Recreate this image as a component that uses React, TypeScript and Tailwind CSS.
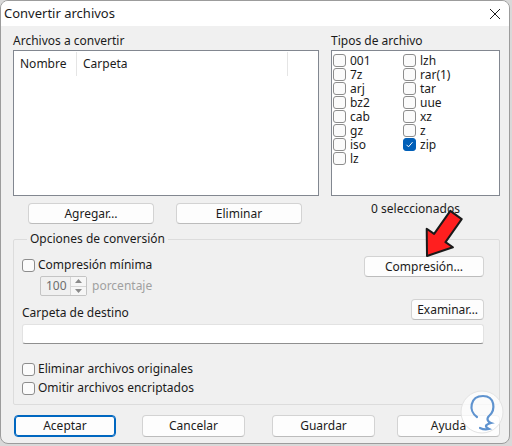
import React from 'react';

function Check({ checked = false }: { checked?: boolean }) {
  return (
    <span
      className={
        'w-[13px] h-[13px] rounded-[3px] border flex items-center justify-center shrink-0 ' +
        (checked ? 'bg-[#005fb8] border-[#005fb8]' : 'bg-[#fbfbfb] border-[#8d8d8d]')
      }
    >
      {checked && (
        <svg width="9" height="9" viewBox="0 0 9 9">
          <path d="M1.5 4.8 L3.5 6.8 L7.5 2.2" fill="none" stroke="white" strokeWidth="1" />
        </svg>
      )}
    </span>
  );
}

function Btn({
  children,
  w,
  tall = false,
  primary = false,
}: {
  children: React.ReactNode;
  w: string;
  tall?: boolean;
  primary?: boolean;
}) {
  return (
    <div
      className={
        'rounded-[4px] flex items-center justify-center bg-[#fdfdfd] text-[#1b1b1b] ' +
        w +
        (tall ? ' h-[22px]' : ' h-[21px]') +
        (primary
          ? ' border border-[#0067c0] shadow-[inset_0_0_0_1px_#0067c0]'
          : ' border border-[#d3d3d3] border-b-[#bcbcbc]')
      }
    >
      {children}
    </div>
  );
}

const types1 = ['001', '7z', 'arj', 'bz2', 'cab', 'gz', 'iso', 'lz'];
const types2 = ['lzh', 'rar(1)', 'tar', 'uue', 'xz', 'z', 'zip'];

export default function App() {
  return (
    <div className="relative w-[512px] h-[446px] bg-[#d9d9d9] overflow-hidden font-['Noto_Sans',sans-serif] text-[12px] text-[#1b1b1b]">
      <div className="w-[510px] h-[444px] rounded-[8px] overflow-hidden border border-[#9c9c9c] bg-[#f0f0f0] flex flex-col">
        {/* title bar */}
        <div className="h-[25px] bg-white flex items-center justify-between pl-[3px] pr-[8px]">
          <span className="text-[13px] leading-[16px] -mt-[1px]">Convertir archivos</span>
          <svg width="12" height="12" viewBox="0 0 12 12">
            <path d="M1 1 L11 11 M11 1 L1 11" stroke="#1b1b1b" strokeWidth="1" />
          </svg>
        </div>

        <div className="pl-[12px] pr-[9px] pt-[7px] flex flex-col">
          {/* top */}
          <div className="flex gap-[12px]">
            <div className="w-[306px] flex flex-col">
              <div className="leading-[16px]">Archivos a convertir</div>
              <div className="mt-[1px] h-[146px] border border-[#828790] bg-white">
                <div className="flex h-[24px] mt-[1px] items-center">
                  <div className="w-[63px] h-full flex items-center pl-[6px] border-r border-[#e5e5e5]">Nombre</div>
                  <div className="w-[211px] h-full flex items-center pl-[6px] border-r border-[#e5e5e5]">Carpeta</div>
                </div>
              </div>
              <div className="mt-[7px] flex gap-[22px] pl-[15px]">
                <Btn w="w-[126px]">Agregar…</Btn>
                <Btn w="w-[126px]">Eliminar</Btn>
              </div>
            </div>
            <div className="w-[169px] flex flex-col">
              <div className="leading-[16px]">Tipos de archivo</div>
              <div className="mt-[1px] h-[146px] border border-[#828790] bg-white pl-[1px] pt-[2px] flex">
                <div className="w-[70px] flex flex-col">
                  {types1.map((t) => (
                    <div key={t} className="h-[14px] flex items-center gap-[4px]">
                      <Check />
                      <span className="leading-[13px]">{t}</span>
                    </div>
                  ))}
                </div>
                <div className="flex flex-col">
                  {types2.map((t) => (
                    <div key={t} className="h-[14px] flex items-center gap-[4px]">
                      <Check checked={t === 'zip'} />
                      <span className="leading-[13px]">{t}</span>
                    </div>
                  ))}
                </div>
              </div>
              <div className="mt-[5px] leading-[16px] text-center">0 seleccionados</div>
            </div>
          </div>

          {/* group */}
          <fieldset className="mt-[7px] border border-[#dcdcdc] rounded-[2px] pl-[8px] pr-[15px] pb-[8px]">
            <legend className="ml-[5px] px-[3px] leading-[16px]">Opciones de conversión</legend>
            <div className="mt-[9px] flex justify-between">
              <div className="flex flex-col pt-[1px]">
                <div className="flex items-center gap-[3px] leading-[16px]">
                  <Check />
                  <span>Compresión mínima</span>
                </div>
                <div className="mt-[3px] ml-[18px] flex items-center">
                  <div className="w-[47px] h-[20px] border border-[#c4c4c4] rounded-[2px] flex">
                    <div className="flex-1 flex items-center pl-[5px] text-[#6d6d6d]">100</div>
                    <div className="w-[16px] border-l border-[#d6d6d6] flex flex-col bg-[#f6f6f6]">
                      <div className="flex-1 flex items-center justify-center border-b border-[#d6d6d6]">
                        <svg width="7" height="4" viewBox="0 0 7 4"><path d="M0 4 L3.5 0 L7 4Z" fill="#8a8a8a" /></svg>
                      </div>
                      <div className="flex-1 flex items-center justify-center">
                        <svg width="7" height="4" viewBox="0 0 7 4"><path d="M0 0 L3.5 4 L7 0Z" fill="#8a8a8a" /></svg>
                      </div>
                    </div>
                  </div>
                  <span className="ml-[5px] text-[#a0a0a0]">porcentaje</span>
                </div>
              </div>
              <Btn w="w-[120px]">Compresión…</Btn>
            </div>
            <div className="mt-[3px] flex justify-between items-end">
              <span className="leading-[16px] mb-[-1px]">Carpeta de destino</span>
              <Btn w="w-[73px]">Examinar…</Btn>
            </div>
            <div className="mt-[4px] h-[20px] bg-white border border-[#e2e2e2] border-b-[#8f8f8f] rounded-[3px]" />
            <div className="mt-[17px] flex items-center gap-[3px] leading-[16px]">
              <Check />
              <span>Eliminar archivos originales</span>
            </div>
            <div className="mt-[3px] flex items-center gap-[3px] leading-[16px]">
              <Check />
              <span>Omitir archivos encriptados</span>
            </div>
          </fieldset>

          {/* bottom */}
          <div className="mt-[10px] flex pl-[1px]">
            <Btn w="w-[103px]" tall primary>Aceptar</Btn>
            <div className="ml-[26px]"><Btn w="w-[103px]" tall>Cancelar</Btn></div>
            <div className="ml-[27px]"><Btn w="w-[103px]" tall>Guardar</Btn></div>
            <div className="ml-[22px]"><Btn w="w-[103px]" tall>Ayuda</Btn></div>
          </div>
        </div>
      </div>

      {/* red arrow */}
      <svg className="absolute left-[415px] top-[200px]" width="60" height="65" viewBox="415 200 60 65">
        <polygon
          points="450.3,210.9 434.1,233.9 426.7,228.7 427,256 452.9,247.3 445.5,242.1 461.7,219.1"
          fill="#ff1f1f"
          stroke="#1a1a1a"
          strokeWidth="2"
          strokeLinejoin="round"
        />
      </svg>

      {/* watermark */}
      <svg className="absolute left-[458px] top-[388px]" width="50" height="50" viewBox="0 0 50 50">
        <circle cx="24" cy="24" r="21" fill="rgba(255,255,255,0.75)" stroke="#e3e3e3" strokeWidth="1" />
        <path
          d="M19 29 C10 23, 12 8, 25 8 C37 8, 38 22, 31 28 C28 31, 30 34, 33 35 C29 36, 25 38, 31 41 C27 42, 24 41, 22 40"
          fill="none"
          stroke="#5f93cf"
          strokeWidth="2.2"
          strokeLinecap="round"
        />
      </svg>
    </div>
  );
}
